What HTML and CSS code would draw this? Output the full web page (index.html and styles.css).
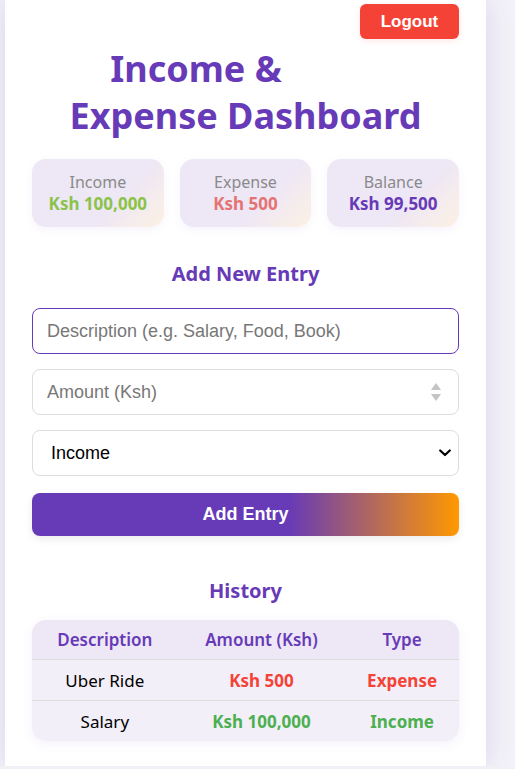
FILE: index.html
```html
<!DOCTYPE html>
<html lang="en">
<head>
<meta charset="utf-8">
<title>Income &amp; Expense Dashboard</title>
<link rel="stylesheet" href="styles.css">
</head>
<body>
<div class="page">
  <main class="card">
    <button class="logout" type="button">Logout</button>
    <h1 class="title">Income &amp;<br>Expense Dashboard</h1>
    <section class="summary">
      <div class="stat">
        <span class="stat-label">Income</span>
        <span class="stat-value income">Ksh 100,000</span>
      </div>
      <div class="stat">
        <span class="stat-label">Expense</span>
        <span class="stat-value expense">Ksh 500</span>
      </div>
      <div class="stat">
        <span class="stat-label">Balance</span>
        <span class="stat-value balance">Ksh 99,500</span>
      </div>
    </section>
    <h2 class="section-title">Add New Entry</h2>
    <form class="entry-form">
      <input class="field field-focus" type="text" placeholder="Description (e.g. Salary, Food, Book)" autofocus>
      <div class="control">
        <input class="field number" type="number" placeholder="Amount (Ksh)">
        <svg class="spinner" width="10" height="20" viewBox="0 0 10 20" aria-hidden="true">
          <path d="M5 1 L10 8 L0 8 Z" fill="#c4c4c4"/>
          <path d="M0 12 L10 12 L5 19 Z" fill="#c4c4c4"/>
        </svg>
      </div>
      <div class="control">
        <select class="field select">
          <option>Income</option>
          <option>Expense</option>
        </select>
        <svg class="chevron" width="12" height="8" viewBox="0 0 12 8" aria-hidden="true">
          <path d="M1.2 1.5 L6 6 L10.8 1.5" fill="none" stroke="#000" stroke-width="2.2" stroke-linecap="round" stroke-linejoin="round"/>
        </svg>
      </div>
      <button class="add-btn" type="button">Add Entry</button>
    </form>
    <h2 class="section-title history-title">History</h2>
    <table class="history">
      <thead>
        <tr><th>Description</th><th>Amount (Ksh)</th><th>Type</th></tr>
      </thead>
      <tbody>
        <tr><td>Uber Ride</td><td class="neg">Ksh 500</td><td class="neg">Expense</td></tr>
        <tr><td>Salary</td><td class="pos">Ksh 100,000</td><td class="pos">Income</td></tr>
      </tbody>
    </table>
  </main>
</div>
</body>
</html>
```
FILE: styles.css
```css
html, body {
  margin: 0;
  padding: 0;
}
body {
  background: #f1f0f7;
  font-family: "Noto Sans", "Open Sans", sans-serif;
}
.page {
  height: 766px;
  overflow: hidden;
  padding-left: 5px;
  background: #f3f2f8;
}
.card {
  box-sizing: border-box;
  width: 481px;
  height: 766px;
  padding: 4px 27px 0 27px;
  background: #ffffff;
  box-shadow: 0 0 28px rgba(103, 58, 183, 0.16);
}
.logout {
  float: right;
  width: 99px;
  height: 35px;
  margin-bottom: 12px;
  border: none;
  border-radius: 6px;
  background: #f44336;
  color: #ffffff;
  font-family: "Liberation Sans", Arial, sans-serif;
  font-weight: bold;
  font-size: 17px;
  box-shadow: 0 2px 6px rgba(244, 67, 54, 0.12);
}
.title {
  margin: 41px 0 0 0;
  text-align: center;
  color: #673ab7;
  font-size: 36px;
  line-height: 47px;
  font-weight: 700;
}
.summary {
  display: flex;
  gap: 16px;
  margin-top: 20px;
}
.stat {
  flex: 1;
  height: 68px;
  border-radius: 14px;
  background: linear-gradient(135deg, #ede7f6 62%, #fdf1e3 100%);
  box-shadow: 0 3px 10px rgba(103, 58, 183, 0.06);
  display: flex;
  flex-direction: column;
  align-items: center;
  justify-content: center;
}
.stat-label {
  color: #8a8a8a;
  font-size: 16px;
  line-height: 22px;
}
.stat-value {
  font-weight: 700;
  font-size: 17px;
  line-height: 22px;
}
.income { color: #8bc34a; }
.expense { color: #e57373; }
.balance { color: #673ab7; }
.section-title {
  margin: 32px 0 0 0;
  text-align: center;
  color: #673ab7;
  font-size: 20px;
  line-height: 30px;
  font-weight: 700;
}
.entry-form {
  display: flex;
  flex-direction: column;
  gap: 15px;
  margin-top: 19px;
}
.control {
  position: relative;
}
.field {
  display: block;
  box-sizing: border-box;
  width: 100%;
  height: 46px;
  margin: 0;
  padding: 0 14px;
  border: 1px solid #dddddd;
  border-radius: 8px;
  background: #ffffff;
  font-family: "Liberation Sans", Arial, sans-serif;
  font-size: 18px;
  color: #000000;
  outline: none;
}
.field::placeholder {
  color: #777777;
}
.field-focus {
  border-color: #673ab7;
}
.number {
  -moz-appearance: textfield;
}
.number::-webkit-inner-spin-button,
.number::-webkit-outer-spin-button {
  -webkit-appearance: none;
  margin: 0;
}
.spinner {
  position: absolute;
  right: 18px;
  top: 13px;
}
.select {
  -webkit-appearance: none;
  appearance: none;
  padding-left: 18px;
}
.chevron {
  position: absolute;
  right: 8px;
  top: 19px;
  pointer-events: none;
}
.add-btn {
  height: 43px;
  margin-top: 2px;
  border: none;
  border-radius: 8px;
  background: linear-gradient(90deg, #673ab7 60%, #ff9800 100%);
  color: #ffffff;
  font-family: "Liberation Sans", Arial, sans-serif;
  font-weight: bold;
  font-size: 18px;
  box-shadow: 0 3px 8px rgba(0, 0, 0, 0.08);
}
.history-title {
  margin-top: 40px;
}
.history {
  width: 100%;
  margin-top: 14px;
  border-collapse: separate;
  border-spacing: 0;
  border-radius: 14px;
  overflow: hidden;
  box-shadow: 0 3px 12px rgba(103, 58, 183, 0.07);
  font-size: 17px;
}
.history th {
  background: #ede7f6;
  color: #673ab7;
  font-weight: 600;
  height: 39px;
  padding: 0 10px;
}
.history td {
  background: #f3eff9;
  border-top: 1px solid #dddddd;
  text-align: center;
  height: 40px;
  padding: 0 10px;
  color: #000000;
}
.history td.neg {
  color: #f44336;
  font-weight: 700;
}
.history td.pos {
  color: #4caf50;
  font-weight: 700;
}
```
